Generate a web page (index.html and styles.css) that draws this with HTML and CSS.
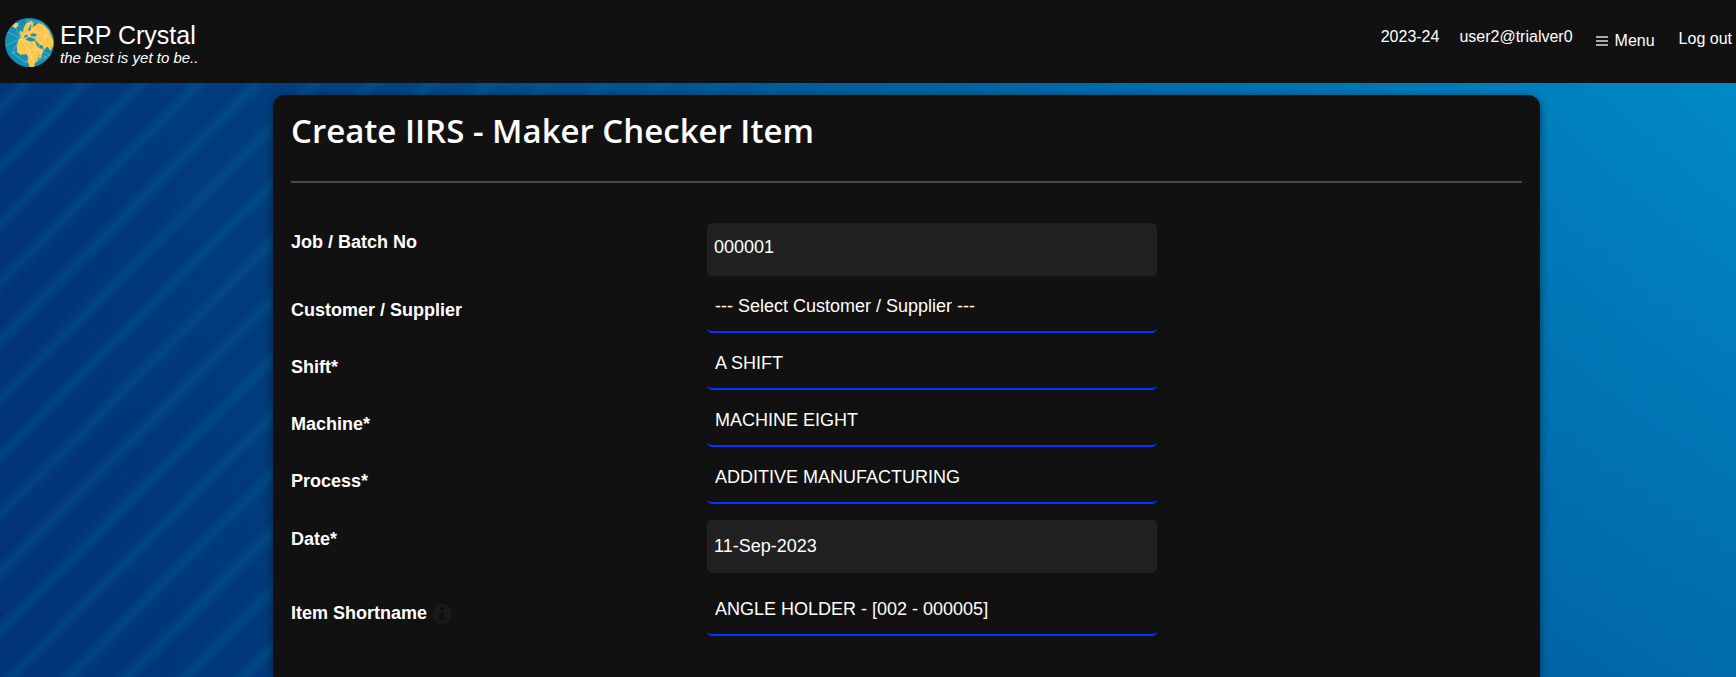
FILE: index.html
```html
<!DOCTYPE html>
<html lang="en">
<head>
<meta charset="utf-8">
<title>ERP Crystal</title>
<link rel="stylesheet" href="styles.css">
</head>
<body>
<header class="topbar">
  <div class="brand">
    <svg class="globe" viewBox="0 0 48 48" aria-hidden="true">
      <circle cx="24" cy="24" r="24" fill="#1391b5"/>
      <g fill="#fdc64b">
        <path d="M13 22l3-3 6-.5 2 2 4 .5 3 1 2 5 2 3 3 0-1 4-4 3-.5 4-3 3-1 4-2.500 1.500-2-1-1.500-6 .5-4-2-3-6 .5-3-3-.5-5z"/>
        <path d="M15 18v-4l3-1 0-3 3-5 5-2 2 2-1 4 3-2 3-2 5 2 5 5 4 9 .5 6-3 5-3-4-3 3-2-4-3-1-3-4-2 0-3-3-3 0-1-3-2 1-2 3z"/>
        <path d="M7 8l3-3 3 0 0 3-3 2zM33 38l2-4 1.500 0-1 5-2 1zM14 15l1-3 1 1 0 3z"/>
      </g>
      <g fill="#1391b5"><path d="M20 20l4-1 5 1 1 2-4 1-4-1zM25 16l3-1 3 1-1 2-4 0zM23 11l2-5 1 1-1 5-2 1zM29 22l2 1 3 6-1 1z"/></g>
      <g class="net"><path d="M3 14l12 6 12-8 14 5 6 7M9 6l6 14-8 14 14 10 3-12-9-12M27 12l-6-10 15 3 5 12-9 13-17-10M24 32l8-2 12 6-16 8-4-12M1 27l14-7M21 44l11-14 9 10M36 5l8 9M7 34l17-2"/></g>
    </svg>
    <div>
      <div class="brand-name">ERP Crystal</div>
      <div class="brand-tag">the best is yet to be..</div>
    </div>
  </div>
  <nav class="nav">
    <span class="nav-text">2023-24</span>
    <span class="nav-text">user2@trialver0</span>
    <button class="nav-menu" type="button">
      <svg class="bars" viewBox="0 0 12 10" aria-hidden="true"><path d="M0 0h12v2H0zM0 4h12v2H0zM0 8h12v2H0z"/></svg>Menu
    </button>
    <a class="nav-logout" href="#">Log out</a>
  </nav>
</header>
<main class="page">
  <section class="card">
    <h1 class="title">Create IIRS - Maker Checker Item</h1>
    <form class="form">
      <div class="row row-input">
        <label class="label" for="job">Job / Batch No</label>
        <input class="field field-job" id="job" type="text" value="000001" readonly>
      </div>
      <div class="row">
        <label class="label" for="customer">Customer / Supplier</label>
        <select class="field select" id="customer"><option>--- Select Customer / Supplier ---</option></select>
      </div>
      <div class="row">
        <label class="label" for="shift">Shift*</label>
        <select class="field select" id="shift"><option>A SHIFT</option></select>
      </div>
      <div class="row">
        <label class="label" for="machine">Machine*</label>
        <select class="field select" id="machine"><option>MACHINE EIGHT</option></select>
      </div>
      <div class="row">
        <label class="label" for="process">Process*</label>
        <select class="field select" id="process"><option>ADDITIVE MANUFACTURING</option></select>
      </div>
      <div class="row row-input row-date">
        <label class="label" for="date">Date*</label>
        <input class="field" id="date" type="text" value="11-Sep-2023">
      </div>
      <div class="row">
        <label class="label" for="item">Item Shortname
          <svg class="info" viewBox="0 0 20 20" aria-hidden="true"><circle cx="10" cy="10" r="10" fill="#1a1a1a"/><path fill="#101010" d="M8 3h4v3H8zM7 8h5v5h1v3H7v-3h1v-3H7z"/></svg>
        </label>
        <select class="field select" id="item"><option>ANGLE HOLDER - [002 - 000005]</option></select>
      </div>
    </form>
  </section>
</main>
</body>
</html>
```
FILE: styles.css
```css
* {
  box-sizing: border-box;
}

body {
  margin: 0;
  min-height: 100vh;
  display: flex;
  flex-direction: column;
  background: #003377;
  color: #fff;
  font-family: "Liberation Sans", Arial, sans-serif;
  font-size: 16px;
}

.topbar {
  display: flex;
  justify-content: space-between;
  align-items: flex-start;
  height: 83px;
  padding: 18px 4px 0 5px;
  background: #111;
}

.brand {
  display: flex;
  gap: 6px;
}

.globe {
  width: 49px;
  height: 49px;
}

.net {
  fill: none;
  stroke: #fff;
  stroke-width: 0.5;
  opacity: 0.5;
}

.brand-name {
  margin-top: 3px;
  font-size: 25px;
  line-height: 28px;
}

.brand-tag {
  font-size: 15px;
  font-style: italic;
  line-height: 18px;
}

.nav {
  display: flex;
  gap: 20px;
  line-height: 18px;
  padding-top: 10px;
}

.nav-menu {
  display: flex;
  align-items: center;
  gap: 7px;
  margin: 4px 0 0 3px;
  padding: 0;
  border: 0;
  background: none;
  color: inherit;
  font: inherit;
  line-height: 18px;
}

.bars {
  width: 12px;
  height: 10px;
  fill: #aaa;
}

.nav-logout {
  margin: 2px 0 0 4px;
  color: inherit;
  text-decoration: none;
}

.page {
  position: relative;
  flex: 1;
  display: flex;
  padding-top: 12px;
  overflow: hidden;
  background:
    linear-gradient(to bottom, rgba(0, 50, 120, 0), rgba(0, 50, 120, 0.35)),
    linear-gradient(to right, #003577 0%, #003e7e 16%, #00609f 50%, #007ebc 86%, #0089c6 100%);
}

.page::before {
  content: "";
  position: absolute;
  inset: 0;
  background: repeating-linear-gradient(135deg, rgba(0, 125, 165, 0) 0 8px, rgba(0, 125, 165, 0.22) 18px, rgba(0, 125, 165, 0) 28px 41px);
  -webkit-mask-image: linear-gradient(to right, #000 30%, transparent 75%);
  mask-image: linear-gradient(to right, #000 30%, transparent 75%);
}

.card {
  position: relative;
  width: 73%;
  margin-left: 273px;
  padding: 0 18px 20px;
  border-radius: 12px 12px 0 0;
  background: #111;
  box-shadow: 0 2px 8px rgba(0, 0, 0, 0.5);
}

.title {
  margin: 0;
  padding: 12px 0 26px;
  border-bottom: 2px solid #4a4a4a;
  font-family: "Open Sans", "Noto Sans", sans-serif;
  font-size: 33px;
  font-weight: 600;
  line-height: 48px;
}

.form {
  display: flex;
  flex-direction: column;
  gap: 4px;
  padding-top: 40px;
  font-size: 18px;
}

.row {
  display: grid;
  grid-template-columns: 416px minmax(0, 450px);
}

.row-date {
  margin: 12px 0 6px;
}

.label {
  padding-top: 20px;
  font-weight: bold;
  line-height: 20px;
}

.row-input .label {
  padding-top: 9px;
}

.field {
  width: 100%;
  height: 53px;
  margin: 0;
  padding: 0 7px;
  border: 0;
  border-radius: 5px;
  outline: 0;
  background: #212121;
  color: #fff;
  font: inherit;
}

.field-job {
  padding-bottom: 4px;
}

.select {
  appearance: none;
  padding: 0 8px;
  border-bottom: 2px solid #0037ff;
  background: #111;
}

.info {
  width: 20px;
  height: 20px;
  margin: -4px 0;
  vertical-align: middle;
}
```
